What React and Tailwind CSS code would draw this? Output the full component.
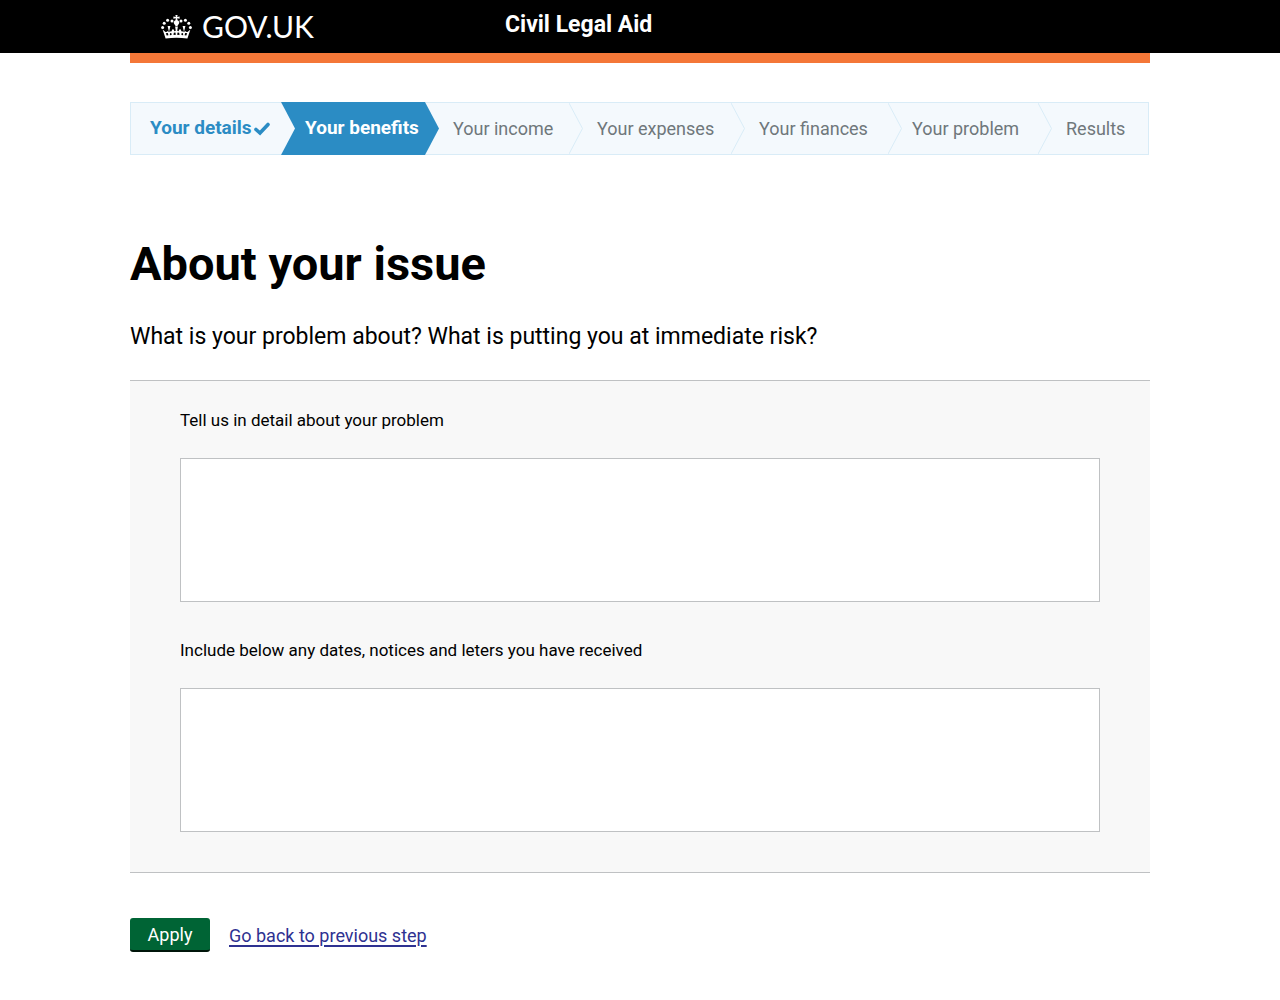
const steps = [
  { name: "Your details", state: "done", pad: "pl-[19px]" },
  { name: "Your benefits", state: "current", pad: "pl-[10px]" },
  { name: "Your income", state: "todo", pad: "pl-[14px]" },
  { name: "Your expenses", state: "todo", pad: "pl-[14px]" },
  { name: "Your finances", state: "todo", pad: "pl-[14px]" },
  { name: "Your problem", state: "todo", pad: "pl-[10px]" },
  { name: "Results", state: "todo", pad: "pl-[14px]" },
];

const look = {
  done: "bg-[#f4f9fd] text-[19px] font-bold text-[#2b8cc4] border-y border-[#d9ecf7]",
  current: "bg-[#2b8cc4] text-[19px] font-bold text-white border-y border-[#2b8cc4]",
  todo: "bg-[#f4f9fd] text-[18px] text-[#6f777b] border-y border-[#d9ecf7]",
};

function Crown() {
  return (
    <svg viewBox="0 0 31 24" className="h-6 w-[31px] shrink-0" fill="white" aria-hidden="true">
      <circle cx="1.6" cy="12.6" r="1.5" />
      <circle cx="3.2" cy="8.3" r="1.5" />
      <circle cx="6.6" cy="5.3" r="1.5" />
      <circle cx="11" cy="5.9" r="1.5" />
      <circle cx="20" cy="5.9" r="1.5" />
      <circle cx="24.4" cy="5.3" r="1.5" />
      <circle cx="27.8" cy="8.3" r="1.5" />
      <circle cx="29.4" cy="12.6" r="1.5" />
      <path d="M14.400 0h2.200l-.4 1.900 2.400-.5v2.400l-2.400-.5.3 1.900c1.400.6 2 1.700 1.700 2.900-.3 1.100-1.200 1.700-1.700 2.900h-2c-.5-1.200-1.400-1.800-1.700-2.900-.3-1.200.3-2.300 1.700-2.900l.3-1.900-2.400.5V1.400l2.400.5z" />
      <path d="M4.600 23.500 1.600 14.500l2.600 2.200c.8.500 1.800.3 2.300-.6l1 1.200.2-1.600-1.100-4.700h2.800l-1.100 4.700.2 1.600c.5-.9 1.300-1.300 2.400-1-.3-.9 0-1.800 1-2 1 .1 1.500.9 1.200 1.900l1.700-.5-.7-4.200h2.800l-.7 4.200 1.700.5c-.3-1 .2-1.800 1.200-1.900 1 .2 1.300 1.100 1 2 1.100-.3 1.900.1 2.400 1l.2-1.600-1.100-4.700h2.800l-1.100 4.700.2 1.600 1-1.200c.5.9 1.500 1.100 2.300.6l2.600-2.200-3 9c-7.300-1-14.500-1-21.800 0z" />
      <g fill="black">
        <path d="M4.800 18.200 6.900 17.900 7.400 20.300 5.700 20.500zM9 17.900 10.700 18.400 10.500 20 8.800 20.200zM12.800 17.700 14.400 17.400 14.900 19.700 12.500 19.900zM18.200 17.700 16.600 17.400 16.100 19.700 18.500 19.900zM22 17.900 20.300 18.400 20.500 20 22.200 20.200zM26.200 18.200 24.100 17.900 23.600 20.300 25.300 20.500z" />
      </g>
    </svg>
  );
}

function Notch({ previous }) {
  return (
    <svg viewBox="0 0 14 53" className="-my-px h-[53px] w-[14px] shrink-0" aria-hidden="true">
      {previous === "done" && <path d="M0 0L14 26.500L0 53z" fill="#f4f9fd" />}
      {previous === "current" && <path d="M0 0L14 26.500L0 53z" fill="#2b8cc4" />}
      {previous === "todo" && <path d="M0 1L13.500 26.500L0 52" fill="none" stroke="#d9ecf7" />}
    </svg>
  );
}

function Field({ id, label }) {
  return (
    <div>
      <label htmlFor={id} className="block text-[17px] leading-6">{label}</label>
      <textarea id={id} className="mt-[26px] block h-36 w-full resize-none border border-[#bfc1c3] bg-white p-2 text-[17px] outline-none" />
    </div>
  );
}

export default function App() {
  return (
    <div className="min-h-screen bg-white font-['Roboto',sans-serif] text-black">
      <header className="bg-black">
        <div className="mx-auto flex h-[53px] max-w-[1020px] items-center text-white">
          <a href="#home" className="flex w-[375px] items-center gap-[10px] pl-[31px]">
            <Crown />
            <span className="pb-px font-['Lato',sans-serif] text-[30px] leading-8">GOV.UK</span>
          </a>
          <a href="#service" className="pb-[3px] text-[23px] leading-7 font-bold">Civil Legal Aid</a>
        </div>
      </header>
      <div className="mx-auto max-w-[1020px]">
        <div className="h-[10px] bg-[#f47738]" />
        <nav aria-label="Progress" className="mt-[39px] mr-px">
          <ol className="grid grid-cols-[150fr_144fr_144fr_162fr_157fr_150fr_110fr] border-x border-[#d9ecf7]">
            {steps.map((s, i) => (
              <li key={s.name} className={`flex h-[53px] items-center whitespace-nowrap ${look[s.state]}`}>
                {i > 0 && <Notch previous={steps[i - 1].state} />}
                <span className={s.pad}>{s.name}</span>
                {s.state === "done" && (
                  <svg viewBox="0 0 16 14" className="ml-[2px] h-[14px] w-4" fill="none" stroke="#2b8cc4" strokeWidth="3.600" role="img" aria-label="completed">
                    <path d="M2 7.500L6 11L14 2.500" strokeLinecap="round" />
                  </svg>
                )}
              </li>
            ))}
          </ol>
        </nav>
        <main>
          <h1 className="mt-[84px] text-[47px] leading-[50px] font-bold">About your issue</h1>
          <p className="mt-[33px] text-[23px] leading-[30px]">What is your problem about? What is putting you at immediate risk?</p>
          <form onSubmit={(e) => e.preventDefault()}>
            <div className="mt-7 flex flex-col gap-9 border-y border-[#bfc1c3] bg-[#f8f8f8] px-[50px] pt-[27px] pb-10">
              <Field id="problem" label="Tell us in detail about your problem" />
              <Field id="evidence" label="Include below any dates, notices and leters you have received" />
            </div>
            <div className="mt-[45px] flex items-center gap-[19px] pb-12 text-[18px]">
              <button type="submit" className="h-[34px] w-20 rounded-[3px] border-b-2 border-[#00150a] bg-[#006435] text-white">Apply</button>
              <a href="#previous" className="text-[#2e3191] underline decoration-2 underline-offset-[3px]">Go back to previous step</a>
            </div>
          </form>
        </main>
      </div>
    </div>
  );
}
